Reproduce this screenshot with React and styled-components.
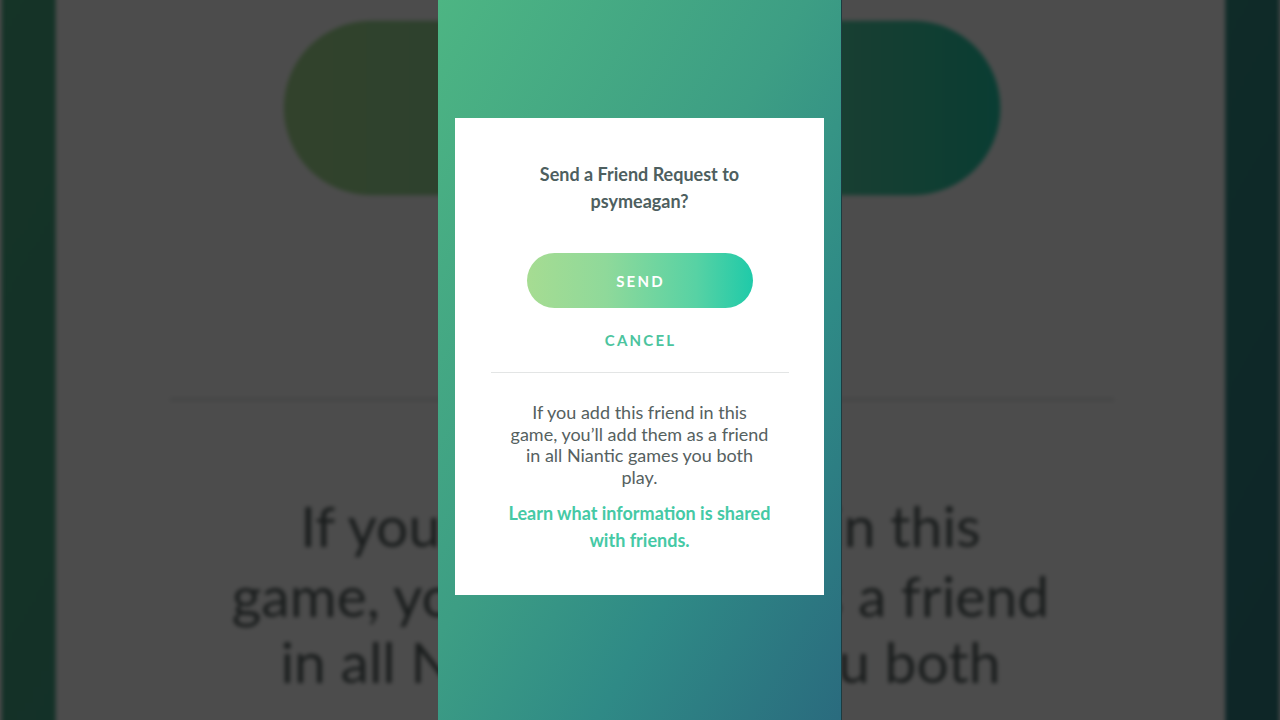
import React from "react";
import styled, { createGlobalStyle } from "styled-components";

const GlobalStyle = createGlobalStyle`
  html, body { margin: 0; padding: 0; background: #4d4d4d; }
  body { font-family: Lato, "Open Sans", sans-serif; }
`;

const Page = styled.div`
  width: 1280px;
  height: 720px;
  overflow: hidden;
  display: grid;
  place-items: center;
  background: #4d4d4d;
`;

const Backdrop = styled.div`
  grid-area: 1 / 1;
  transform: scale(3.17);
  filter: brightness(0.3) blur(0.7px);
  pointer-events: none;
`;

const Foreground = styled.div`
  grid-area: 1 / 1;
  position: relative;
  z-index: 1;
  border-right: 1px solid #1c3b40;
`;

const Screen = styled.div`
  width: 403px;
  height: 720px;
  box-sizing: border-box;
  display: flex;
  flex-direction: column;
  align-items: center;
  padding-top: 118px;
  background: linear-gradient(120deg, #4db583 0%, #3d9e84 45%, #2f8a86 70%, #2a6b7e 100%);
`;

const Card = styled.div`
  width: 369px;
  height: 477px;
  box-sizing: border-box;
  background: #ffffff;
  display: flex;
  flex-direction: column;
  align-items: center;
  padding-top: 43px;
  text-align: center;
`;

const Title = styled.h2`
  margin: 0;
  font-family: Lato, sans-serif;
  font-weight: 700;
  font-size: 18px;
  line-height: 27px;
  color: #4e5f5f;
  width: 240px;
`;

const SendButton = styled.button`
  margin-top: 38px;
  width: 226px;
  height: 55px;
  border: none;
  border-radius: 28px;
  background: linear-gradient(90deg, #a6dc92 0%, #8fd99a 35%, #57d2a4 75%, #1fcaa9 100%);
  color: #ffffff;
  font-family: Lato, sans-serif;
  font-weight: 700;
  font-size: 15px;
  letter-spacing: 2.2px;
  padding: 0 0 0 2px;
  cursor: pointer;
`;

const CancelButton = styled.button`
  margin-top: 22px;
  border: none;
  background: none;
  padding: 0 0 0 2px;
  height: 20px;
  line-height: 20px;
  color: #4cc49e;
  font-family: Lato, sans-serif;
  font-weight: 700;
  font-size: 15px;
  letter-spacing: 2.2px;
  cursor: pointer;
`;

const Divider = styled.hr`
  margin: 22px 0 0;
  width: 298px;
  border: none;
  border-top: 1px solid #e3e5e5;
`;

const Body = styled.p`
  margin: 29px 0 0;
  width: 266px;
  font-family: Lato, sans-serif;
  font-weight: 400;
  font-size: 18px;
  line-height: 21.7px;
  color: #56615f;
`;

const LearnLink = styled.a`
  display: block;
  margin-top: 11px;
  width: 275px;
  font-family: Lato, sans-serif;
  font-weight: 700;
  font-size: 18px;
  line-height: 27px;
  color: #45c9a5;
  text-decoration: none;
`;

function PhoneScreen() {
  return (
    <Screen>
      <Card>
        <Title>Send a Friend Request to psymeagan?</Title>
        <SendButton>SEND</SendButton>
        <CancelButton>CANCEL</CancelButton>
        <Divider />
        <Body>
          If you add this friend in this game, you’ll add them as a friend in
          all Niantic games you both play.
        </Body>
        <LearnLink href="#">Learn what information is shared with friends.</LearnLink>
      </Card>
    </Screen>
  );
}

export default function App() {
  return (
    <>
      <GlobalStyle />
      <Page>
        <Backdrop aria-hidden="true">
          <PhoneScreen />
        </Backdrop>
        <Foreground>
          <PhoneScreen />
        </Foreground>
      </Page>
    </>
  );
}
